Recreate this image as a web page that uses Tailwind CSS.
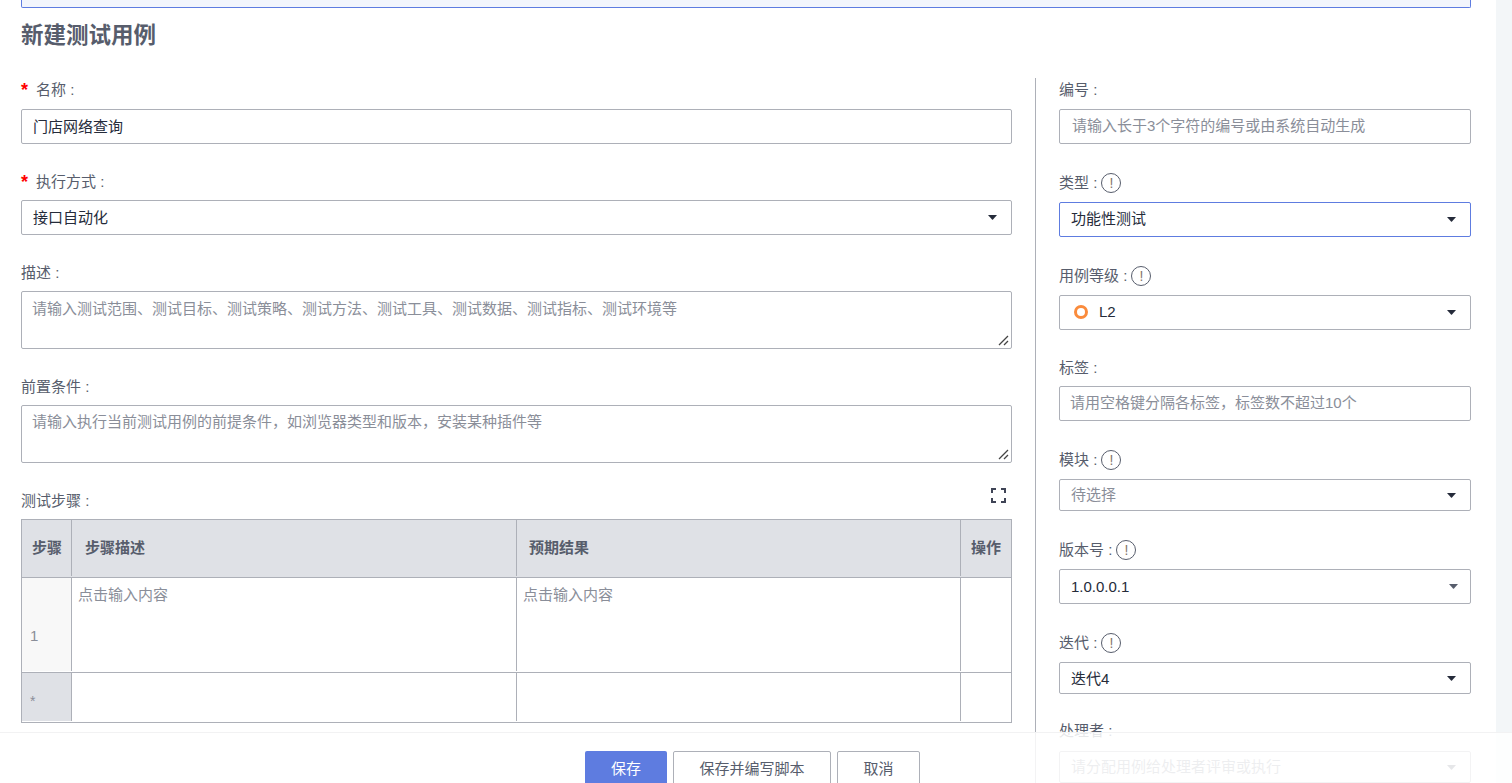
<!DOCTYPE html>
<html lang="zh-CN">
<head>
<meta charset="utf-8">
<title>新建测试用例</title>
<script src="https://cdn.jsdelivr.net/npm/@tailwindcss/browser@4"></script>
</head>
<body class="bg-white">
<div class="relative w-[1512px] h-[783px] overflow-hidden flex bg-white font-['Liberation_Sans','Noto_Sans_CJK_SC',sans-serif] text-[15px] text-[#575d6c]">
  <main class="w-[1496px] pl-[21px] shrink-0">
    <div class="w-[1450px] h-[8px] bg-[#f2f5fc] border border-t-0 border-[#5e7ce0] rounded-b-[2px]"></div>
    <h1 class="h-[54px] pt-[2px] mb-[16px] flex items-center text-[22.5px] font-bold text-[#575d6c]">新建测试用例</h1>
    <div class="flex">
      <section class="w-[991px] shrink-0 flex flex-col">
        <div class="h-[24px] mb-[7px] pt-[1px] flex items-center"><span class="w-[15px] text-[#f00] text-[18px] font-bold">*</span>名称 :</div>
        <div class="h-[35px] border border-[#adb0b8] rounded-[2px] px-[11px] pt-[1px] flex items-center text-[#252b3a]">门店网络查询</div>

        <div class="h-[24px] mt-[26px] mb-[6px] flex items-center"><span class="w-[15px] text-[#f00] text-[18px] font-bold">*</span>执行方式 :</div>
        <div class="h-[35px] border border-[#adb0b8] rounded-[2px] pl-[11px] pr-[14px] flex items-center justify-between text-[#252b3a]"><span class="pt-[2px]">接口自动化</span>
          <svg width="9" height="5" viewBox="0 0 9 5"><path d="M0 0h9L5 4.6a.7.7 0 0 1-1 0z" fill="#252b3a"/></svg>
        </div>

        <div class="h-[24px] mt-[26px] mb-[6px] flex items-center">描述 :</div>
        <div class="relative h-[58px] border border-[#adb0b8] rounded-[2px] px-[10px] pt-[6px] text-[#8a8e99]">请输入测试范围、测试目标、测试策略、测试方法、测试工具、测试数据、测试指标、测试环境等
          <svg class="absolute right-[2px] bottom-[2px]" width="11" height="11" viewBox="0 0 11 11"><path d="M1 10L10 1M6 10L10 6" stroke="#444" stroke-width="1.3" fill="none"/></svg>
        </div>

        <div class="h-[24px] mt-[26px] mb-[6px] flex items-center">前置条件 :</div>
        <div class="relative h-[58px] border border-[#adb0b8] rounded-[2px] px-[10px] pt-[5px] text-[#8a8e99]">请输入执行当前测试用例的前提条件，如浏览器类型和版本，安装某种插件等
          <svg class="absolute right-[2px] bottom-[2px]" width="11" height="11" viewBox="0 0 11 11"><path d="M1 10L10 1M6 10L10 6" stroke="#444" stroke-width="1.3" fill="none"/></svg>
        </div>

        <div class="h-[24px] mt-[26px] mb-[6px] flex items-center justify-between">测试步骤 :
          <svg class="mr-[6px] -mt-[12px]" width="15" height="15" viewBox="0 0 15 15" fill="none" stroke="#3f4456" stroke-width="2"><path d="M1 5V1H5M10 1H14V5M14 10V14H10M5 14H1V10"/></svg>
        </div>
        <div class="border border-[#adb0b8] border-b-0">
          <div class="flex h-[58px] bg-[#dfe1e6] border-b border-[#adb0b8] pb-[1px] font-bold">
            <div class="w-[50px] shrink-0 border-r border-[#adb0b8] pl-[10px] flex items-center">步骤</div>
            <div class="w-[445px] shrink-0 border-r border-[#adb0b8] pl-[13px] flex items-center">步骤描述</div>
            <div class="w-[444px] shrink-0 border-r border-[#adb0b8] pl-[12px] flex items-center">预期结果</div>
            <div class="flex-1 pl-[10px] flex items-center">操作</div>
          </div>
          <div class="flex h-[95px] border-b border-[#adb0b8] pb-[1px] text-[#8a8e99]">
            <div class="w-[50px] shrink-0 bg-[#f8f8f8] border-r border-[#adb0b8] pl-[8px] pt-[47px]">1</div>
            <div class="w-[445px] shrink-0 border-r border-[#adb0b8] pl-[6px] pt-[6px]">点击输入内容</div>
            <div class="w-[444px] shrink-0 border-r border-[#adb0b8] pl-[6px] pt-[6px]">点击输入内容</div>
            <div class="flex-1"></div>
          </div>
          <div class="flex h-[50px] border-b border-[#adb0b8] pb-[1px] text-[#8a8e99]">
            <div class="w-[50px] shrink-0 bg-[#dfe1e6] border-r border-[#adb0b8] pl-[8px] pt-[18px] text-[14px]">*</div>
            <div class="w-[445px] shrink-0 border-r border-[#adb0b8]"></div>
            <div class="w-[444px] shrink-0 border-r border-[#adb0b8]"></div>
            <div class="flex-1"></div>
          </div>
        </div>
      </section>

      <div class="w-[1px] h-[720px] ml-[23px] bg-[#adb0b8] shrink-0"></div>

      <aside class="w-[412px] ml-[23px] shrink-0 flex flex-col">
        <div class="h-[24px] mb-[7px] pt-[1px] flex items-center">编号 :</div>
        <div class="h-[35px] border border-[#adb0b8] rounded-[2px] pl-[12px] flex items-center text-[#8a8e99]">请输入长于3个字符的编号或由系统自动生成</div>

        <div class="h-[24px] mt-[27px] mb-[7px] flex items-center gap-[4px]">类型 :
          <span class="w-[20px] h-[20px] rounded-full border border-[#575d6c] flex items-center justify-center text-[#84766c] text-[14px]">!</span>
        </div>
        <div class="h-[35px] border border-[#5e7ce0] rounded-[2px] pl-[11px] pr-[14px] flex items-center justify-between text-[#252b3a]">功能性测试
          <svg width="9" height="5" viewBox="0 0 9 5"><path d="M0 0h9L5 4.6a.7.7 0 0 1-1 0z" fill="#252b3a"/></svg>
        </div>

        <div class="h-[24px] mt-[27px] mb-[7px] flex items-center gap-[4px]">用例等级 :
          <span class="w-[20px] h-[20px] rounded-full border border-[#575d6c] flex items-center justify-center text-[#84766c] text-[14px]">!</span>
        </div>
        <div class="h-[35px] border border-[#adb0b8] rounded-[2px] pl-[14px] pr-[14px] flex items-center justify-between text-[#252b3a]">
          <span class="flex items-center gap-[11px] -mt-[1px]"><span class="w-[14px] h-[14px] rounded-full border-[3px] border-[#fa8b3c]"></span>L2</span>
          <svg width="9" height="5" viewBox="0 0 9 5"><path d="M0 0h9L5 4.6a.7.7 0 0 1-1 0z" fill="#252b3a"/></svg>
        </div>

        <div class="h-[24px] mt-[26px] mb-[6px] flex items-center">标签 :</div>
        <div class="h-[35px] border border-[#adb0b8] rounded-[2px] pl-[10px] flex items-center text-[#8a8e99]">请用空格键分隔各标签，标签数不超过10个</div>

        <div class="h-[24px] mt-[27px] mb-[7px] flex items-center gap-[4px]">模块 :
          <span class="w-[20px] h-[20px] rounded-full border border-[#575d6c] flex items-center justify-center text-[#84766c] text-[14px]">!</span>
        </div>
        <div class="h-[32px] border border-[#adb0b8] rounded-[2px] pl-[11px] pr-[14px] flex items-center justify-between text-[#8a8e99]">待选择
          <svg width="9" height="5" viewBox="0 0 9 5"><path d="M0 0h9L5 4.6a.7.7 0 0 1-1 0z" fill="#252b3a"/></svg>
        </div>

        <div class="h-[24px] mt-[27px] mb-[7px] flex items-center gap-[4px]">版本号 :
          <span class="w-[20px] h-[20px] rounded-full border border-[#575d6c] flex items-center justify-center text-[#84766c] text-[14px]">!</span>
        </div>
        <div class="h-[35px] border border-[#adb0b8] rounded-[2px] pl-[11px] pr-[12px] flex items-center justify-between text-[#252b3a]"><span class="pt-[2px]">1.0.0.0.1</span>
          <svg width="9" height="5" viewBox="0 0 9 5"><path d="M0 0h9L5 4.6a.7.7 0 0 1-1 0z" fill="#575d6c"/></svg>
        </div>

        <div class="h-[24px] mt-[27px] mb-[7px] flex items-center gap-[4px]">迭代 :
          <span class="w-[20px] h-[20px] rounded-full border border-[#575d6c] flex items-center justify-center text-[#84766c] text-[14px]">!</span>
        </div>
        <div class="h-[32px] border border-[#adb0b8] rounded-[2px] pl-[11px] pr-[14px] flex items-center justify-between text-[#252b3a]"><span class="pt-[2px]">迭代4</span>
          <svg width="9" height="5" viewBox="0 0 9 5"><path d="M0 0h9L5 4.6a.7.7 0 0 1-1 0z" fill="#252b3a"/></svg>
        </div>

        <div class="h-[24px] mt-[25px] mb-[8px] flex items-center">处理者 :</div>
        <div class="h-[32px] border border-[#adb0b8] rounded-[2px] pl-[11px] pr-[14px] flex items-center justify-between text-[#8a8e99]">请分配用例给处理者评审或执行
          <svg width="9" height="5" viewBox="0 0 9 5"><path d="M0 0h9L5 4.6a.7.7 0 0 1-1 0z" fill="#575d6c"/></svg>
        </div>
      </aside>
    </div>
  </main>
  <div class="flex-1 bg-[#f3f6f8]"></div>

  <footer class="absolute left-0 right-0 bottom-0 h-[51px] bg-white/85 border-t border-[#f2f2f3]">
    <div class="absolute left-[585px] top-[18px] flex gap-[6px]">
      <button class="w-[82px] h-[36px] rounded-[2px] bg-[#5e7ce0] text-white text-[15px]">保存</button>
      <button class="w-[158px] h-[36px] rounded-[2px] border border-[#adb0b8] bg-white text-[#575d6c] text-[15px]">保存并编写脚本</button>
      <button class="w-[83px] h-[36px] rounded-[2px] border border-[#adb0b8] bg-white text-[#575d6c] text-[15px]">取消</button>
    </div>
  </footer>
</div>
</body>
</html>
